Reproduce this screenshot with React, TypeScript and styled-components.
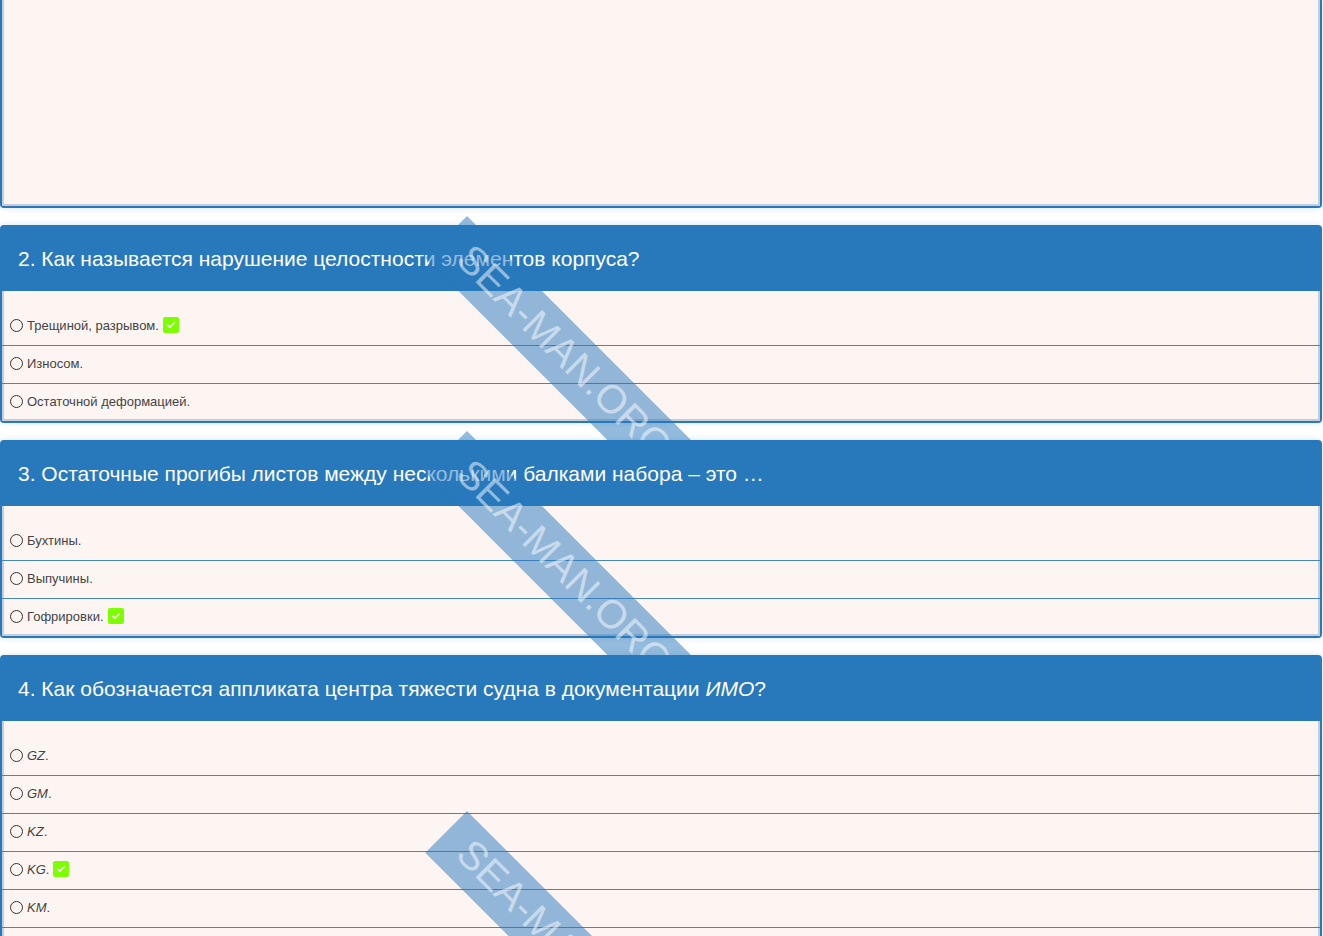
import React from "react";
import styled, { createGlobalStyle } from "styled-components";

const blue = "#2878bc";

const GlobalStyle = createGlobalStyle`
  *, *::before, *::after { box-sizing: border-box; }
  body {
    margin: 0;
    background: #fff;
    color: #444;
    font-family: "Liberation Sans", Arial, sans-serif;
  }
`;

const Page = styled.main`
  display: flex;
  flex-direction: column;
  gap: 17px;
  height: 100vh;
  padding-right: 1px;
  overflow: hidden;
`;

const Card = styled.section<{ $minHeight?: number; $continued?: boolean }>`
  position: relative;
  z-index: 0;
  display: flex;
  flex: none;
  flex-direction: column;
  min-height: ${(p) => p.$minHeight ?? 0}px;
  border: 2px solid ${blue};
  border-top-width: ${(p) => (p.$continued ? 0 : 2)}px;
  border-radius: ${(p) => (p.$continued ? "0 0 4px 4px" : "4px")};
  background: #fdf5f2;
  box-shadow: 0 0 6px rgba(40, 120, 188, 0.2);
`;

const Title = styled.h2`
  margin: 0;
  padding: 0 16px;
  background: ${blue};
  color: #fff;
  font-size: 21px;
  font-weight: 400;
  line-height: 64px;
`;

const Answers = styled.div`
  flex: 1;
  padding-top: 17px;
  box-shadow: inset 2px 0 #c6ccd8, inset -2px 0 #c6ccd8, inset 0 -2px #c6ccd8;
`;

const Answer = styled.label`
  display: flex;
  align-items: center;
  height: 38px;
  padding: 0 8px 2px;
  border-bottom: 1px solid #4586bb;
  font-size: 13px;
  line-height: 20px;

  &:last-child {
    height: 37px;
    border-bottom: 0;
  }
`;

const Radio = styled.input`
  appearance: none;
  width: 13px;
  height: 13px;
  margin: 0 4px 0 0;
  border: 1px solid #333;
  border-radius: 50%;
  background: transparent;

  &:checked {
    background: radial-gradient(#444 40%, transparent 45%);
  }
`;

const Tick = styled.svg`
  width: 16px;
  height: 16px;
  margin: -2px 0 0 4px;
`;

const Watermark = styled.div`
  position: absolute;
  top: calc(50% - 108px);
  left: 35.25%;
  width: 340px;
  height: 59px;
  padding-left: 23px;
  background: rgba(40, 120, 188, 0.5);
  color: rgba(255, 255, 255, 0.5);
  font-size: 40px;
  line-height: 54px;
  white-space: nowrap;
  pointer-events: none;
  transform: rotate(45deg);
  transform-origin: 0 0;
`;

type Option = { text: string; italic?: boolean; correct?: boolean };
type Question = {
  id: number;
  title: React.ReactNode;
  options: Option[];
  minHeight?: number;
};

const questions: Question[] = [
  {
    id: 2,
    title: "2. Как называется нарушение целостности элементов корпуса?",
    options: [
      { text: "Трещиной, разрывом", correct: true },
      { text: "Износом" },
      { text: "Остаточной деформацией" },
    ],
  },
  {
    id: 3,
    title: "3. Остаточные прогибы листов между несколькими балками набора – это …",
    options: [
      { text: "Бухтины" },
      { text: "Выпучины" },
      { text: "Гофрировки", correct: true },
    ],
  },
  {
    id: 4,
    title: (
      <>
        4. Как обозначается аппликата центра тяжести судна в документации <em>ИМО</em>?
      </>
    ),
    minHeight: 527,
    options: [
      { text: "GZ", italic: true },
      { text: "GM", italic: true },
      { text: "KZ", italic: true },
      { text: "KG", italic: true, correct: true },
      { text: "KM", italic: true },
    ],
  },
];

function CorrectTick() {
  return (
    <Tick viewBox="0 0 16 16" role="img" aria-label="Верно">
      <rect width="16" height="16" rx="2" fill="#7cff00" />
      <path d="M4.4 7.8l2.4 2.3 4.8-4.6" fill="none" stroke="#fff" strokeWidth="1.7" />
    </Tick>
  );
}

function QuestionCard({ question }: { question: Question }) {
  return (
    <Card $minHeight={question.minHeight}>
      <Title>{question.title}</Title>
      <Answers>
        {question.options.map((o) => (
          <Answer key={o.text}>
            <Radio type="radio" name={`question-${question.id}`} />
            <span>{o.italic ? <em>{o.text}</em> : o.text}.</span>
            {o.correct && <CorrectTick />}
          </Answer>
        ))}
        {question.minHeight && <div />}
      </Answers>
      <Watermark aria-hidden="true">SEA-MAN.ORG</Watermark>
    </Card>
  );
}

export default function App() {
  return (
    <>
      <GlobalStyle />
      <Page>
        <Card $minHeight={208} $continued>
          <Answers />
        </Card>
        {questions.map((q) => (
          <QuestionCard key={q.id} question={q} />
        ))}
      </Page>
    </>
  );
}
